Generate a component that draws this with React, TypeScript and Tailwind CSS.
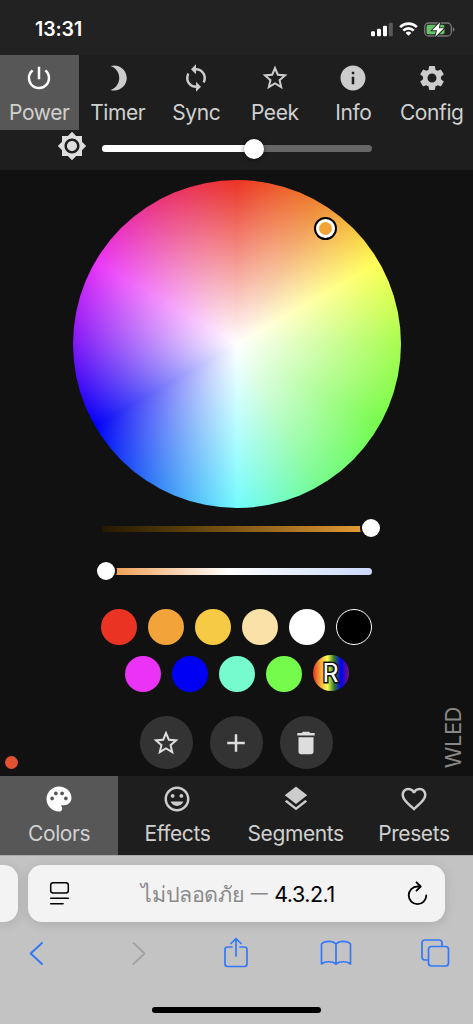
import React from 'react';
import {
    MdAdd,
    MdBrightness3,
    MdBrightness7,
    MdFavoriteBorder,
    MdInfo,
    MdInsertEmoticon,
    MdLayers,
    MdPalette,
    MdPowerSettingsNew,
    MdSettings,
    MdStarBorder,
    MdSync,
} from 'react-icons/md';

const topButtons = [
    { label: 'Power', Icon: MdPowerSettingsNew, active: true },
    { label: 'Timer', Icon: MdBrightness3 },
    { label: 'Sync', Icon: MdSync },
    { label: 'Peek', Icon: MdStarBorder },
    { label: 'Info', Icon: MdInfo },
    { label: 'Config', Icon: MdSettings },
];

const tabs = [
    { label: 'Colors', Icon: MdPalette, active: true },
    { label: 'Effects', Icon: MdInsertEmoticon },
    { label: 'Segments', Icon: MdLayers },
    { label: 'Presets', Icon: MdFavoriteBorder },
];

const StatusBar = () => {
    return (
        <div className="flex h-[55px] items-center justify-between bg-[#222] pt-[3px] pr-[17px] pl-[35px] text-white">
            <span className="pt-[2px] text-[19.5px] leading-none font-semibold tracking-[-0.1px]">13:31</span>
            <div className="flex items-center gap-[6px]">
                <svg width="22" height="15" viewBox="0 0 22 15" fill="#fff">
                    <rect x="0" y="9.3" width="4" height="5" rx="1.2" />
                    <rect x="6" y="6.8" width="4" height="7.5" rx="1.2" />
                    <rect x="12" y="3.8" width="4" height="10.5" rx="1.2" />
                    <rect x="17.8" y="0.8" width="4" height="13.5" rx="1.2" opacity="0.25" />
                </svg>
                <svg width="19" height="14" viewBox="0 0 19 14" fill="none" stroke="#fff" strokeWidth="2.7">
                    <path d="M1.1 5.1a11.9 11.9 0 0 1 16.8 0" />
                    <path d="M4.3 8.6a7.4 7.4 0 0 1 10.4 0" />
                    <path d="M9.5 13.8 6.6 10.9a4.1 4.1 0 0 1 5.8 0z" fill="#fff" stroke="none" />
                </svg>
                <svg width="32" height="17" viewBox="0 0 32 17">
                    <rect x="0.7" y="2" width="26.6" height="13" rx="4" fill="none" stroke="#777" strokeWidth="1.3" />
                    <path d="M28.8 6.3v4.4c1.1-.4 1.7-1.2 1.7-2.2s-.6-1.8-1.7-2.2z" fill="#777" />
                    <rect x="2.5" y="3.8" width="18" height="9.4" rx="2" fill="#65c466" />
                    <path
                        d="M16 1.2 8.2 9.3h4.9l-2 6.8 8.8-8.8h-5z"
                        fill="#fff"
                        stroke="#222"
                        strokeWidth="1.8"
                        paintOrder="stroke"
                    />
                </svg>
            </div>
        </div>
    );
};

interface NavButtonProps {
    label: string;
    Icon: React.ComponentType<{ className?: string }>;
    active?: boolean;
}

const NavButton = ({ label, Icon, active }: NavButtonProps) => {
    return (
        <button
            className={`flex min-w-0 flex-1 flex-col items-center pt-[8px] ${active ? 'bg-[#575757] text-white' : 'text-[#ccc]'}`}
        >
            <Icon className="size-[30px]" />
            <span className="mt-[7px] text-[21px] leading-[25px] tracking-[-0.4px] whitespace-nowrap text-[#d0d0d0]">{label}</span>
        </button>
    );
};

const ColorWheel = () => {
    return (
        <div className="relative size-[328px] rounded-full bg-[radial-gradient(closest-side,#fff,transparent),conic-gradient(#eb3323,#ef8632,#ffff54,#a6fc4e,#75fb4c,#75fb8d,#73fbfd,#3580f6,#0000f5,#7e18f6,#ea33f7,#ea3680,#eb3323)]">
            <div className="absolute top-[37px] left-[241px] size-[23px] rounded-full border-2 border-black bg-white p-[3px]">
                <div className="size-full rounded-full bg-[#f2a43a]" />
            </div>
        </div>
    );
};

const swatches = ['bg-[#eb3323]', 'bg-[#f2a43a]', 'bg-[#f6ca45]', 'bg-[#fae1a8]', 'bg-white', 'border border-white bg-black'];
const swatchesBelow = ['bg-[#ea33f7]', 'bg-[#0000f5]', 'bg-[#75fbce]', 'bg-[#75fb4c]'];

const Swatches = () => {
    return (
        <div className="mt-[34px] flex flex-col items-center gap-[11px]">
            <div className="flex gap-[11px]">
                {swatches.map((color) => (
                    <div key={color} className={`size-[36px] rounded-full ${color}`} />
                ))}
            </div>
            <div className="flex gap-[11px]">
                {swatchesBelow.map((color) => (
                    <div key={color} className={`size-[36px] rounded-full ${color}`} />
                ))}
                <div className="-mt-px flex size-[36px] items-center justify-center rounded-full bg-[linear-gradient(to_right,#eb3323,#f2a43a_20%,#ffff54_40%,#377e22_58%,#0000f5_78%,#75147c)]">
                    <span className="text-[25px] leading-none text-white [-webkit-text-stroke:3px_#111] [paint-order:stroke_fill]">R</span>
                </div>
            </div>
        </div>
    );
};

const TrashIcon = () => {
    return (
        <svg viewBox="0 0 24 24" className="size-[30px]" fill="currentColor">
            <path d="M6 19c0 1.1.9 2 2 2h8c1.1 0 2-.9 2-2V7.300H6V19zM18.500 4h-3l-.7-.7c-.2-.2-.4-.3-.7-.3H9.900c-.3 0-.5.1-.7.3L8.500 4h-3c-.3 0-.5.2-.5.500v1.500h14V4.500c0-.3-.2-.5-.5-.5z" />
        </svg>
    );
};

const roundButton = 'flex size-[53px] items-center justify-center rounded-full bg-[#333] text-[#ddd]';

const Browser = () => {
    return (
        <div className="h-[169px] overflow-hidden border-t border-[#aaa] bg-[#c3c3c3]">
            <div className="mt-[9px] flex gap-[10px]">
                <div className="h-[57px] w-[18px] rounded-r-[14px] bg-[#f3f3f3] shadow-[0_2px_12px_rgba(0,0,0,0.12)]" />
                <div className="flex h-[57px] w-[417px] items-center justify-between rounded-[14px] bg-[#f3f3f3] pr-[16px] pl-[21px] shadow-[0_2px_12px_rgba(0,0,0,0.12)]">
                    <svg width="22" height="26" viewBox="0 0 22 26" fill="none" stroke="#000" strokeWidth="1.5" strokeLinecap="round">
                        <rect x="1.7" y="1.7" width="17.6" height="10.4" rx="2.5" />
                        <path d="M1.7 17.2h17.6M1.7 22.7h12.4" />
                    </svg>
                    <p className="flex items-center gap-[6px] pt-px text-[21.5px] whitespace-nowrap text-black">
                        <span className="tracking-[-0.4px] text-[#8a8a8d]">ไม่ปลอดภัย</span>
                        <span className="w-[18px] text-center text-[17px] text-[#8a8a8d]">—</span>
                        <span className="tracking-[-0.5px]">4.3.2.1</span>
                    </p>
                    <svg width="24" height="26" viewBox="0 0 24 26" fill="none" stroke="#000" strokeWidth="1.8" strokeLinecap="round" strokeLinejoin="round">
                        <path d="M14.5 5.500h-2a8.800 8.800 0 1 0 8.800 8.800" />
                        <path d="m11.5 1.300 4.200 4.200-4.200 4.200" />
                    </svg>
                </div>
            </div>
            <div className="mt-[13px] flex items-center justify-between pr-[22px] pl-[21px] text-[#3478f6]">
                <svg width="32" height="36" viewBox="0 0 32 36" fill="none" stroke="currentColor" strokeWidth="2" strokeLinecap="round" strokeLinejoin="round">
                    <path d="M21 8 9.700 18.500 21 29" />
                </svg>
                <svg width="32" height="36" viewBox="0 0 32 36" fill="none" stroke="#a3a3a3" strokeWidth="2" strokeLinecap="round" strokeLinejoin="round">
                    <path d="m12.500 8 11 10.500-11 10.500" />
                </svg>
                <svg width="32" height="36" viewBox="-2 0 32 36" fill="none" stroke="currentColor" strokeWidth="1.7" strokeLinecap="round" strokeLinejoin="round">
                    <path d="M10 12H5.500Q3 12 3 14.500v14Q3 31.500 5.500 31.500h17Q25 31.500 25 28.500v-14Q25 12 22.500 12H18M14 21V3.500M9 8.500l5-5 5 5" />
                </svg>
                <svg width="32" height="36" viewBox="0 0 32 36" fill="none" stroke="currentColor" strokeWidth="1.7" strokeLinejoin="round">
                    <path d="M16 9C12.500 5.500 5 5.500 1.500 9v20c3.500-3 11-3 14.500 0 3.500-3 11-3 14.500 0V9C27 5.500 19.500 5.500 16 9zm0 0v20" />
                </svg>
                <svg width="32" height="36" viewBox="0 0 32 36" fill="none" stroke="currentColor" strokeWidth="1.7">
                    <rect x="9.5" y="11.5" width="20" height="19.5" rx="3" />
                    <path d="M9.500 25H6q-3 0-3-3V8q0-3 3-3h14q3 0 3 3v3.500" />
                </svg>
            </div>
            <div className="mx-auto mt-[36px] h-[6px] w-[169px] rounded-full bg-black" />
        </div>
    );
};

const App = () => {
    return (
        <div className="flex h-[1024px] w-[473px] flex-col overflow-hidden bg-[#111] font-['Inter','Noto_Sans',sans-serif]">
            <StatusBar />

            <header className="h-[115px] bg-[#1e1e1e]">
                <nav className="flex h-[75px] pr-[2px]">
                    {topButtons.map((button) => (
                        <NavButton key={button.label} {...button} />
                    ))}
                </nav>
                <div className="flex pl-[57px]">
                    <MdBrightness7 className="mt-px size-[30px] text-[#ddd]" />
                    <div className="relative mt-[15px] ml-[15px] h-[7px] w-[270px] rounded-full bg-[#666]">
                        <div className="h-full w-[152px] rounded-full bg-white" />
                        <div className="absolute -top-[6px] left-[142px] size-[20px] rounded-full bg-white shadow-[0_1px_5px_rgba(0,0,0,0.5)]" />
                    </div>
                </div>
            </header>

            <main className="flex h-[606px] flex-col items-center pt-[10px]">
                <ColorWheel />

                <div className="relative mt-[18px] h-[6px] w-[270px] rounded-full bg-linear-to-r from-[#241900] to-[#eda036]">
                    <div className="absolute -top-[7px] left-[260px] size-[18px] rounded-full bg-white ring-2 ring-[#111]" />
                </div>
                <div className="relative mt-[36px] h-[7px] w-[270px] rounded-full bg-[linear-gradient(to_right,#ee9543,#fff_47%,#cbd9fb)]">
                    <div className="absolute -top-[6px] -left-[5px] size-[18px] rounded-full bg-white ring-2 ring-[#111]" />
                </div>

                <Swatches />

                <div className="mt-[24px] flex gap-[17px] pr-px">
                    <button className={roundButton}>
                        <MdStarBorder className="size-[30px]" />
                    </button>
                    <button className={roundButton}>
                        <MdAdd className="size-[30px]" />
                    </button>
                    <button className={roundButton}>
                        <TrashIcon />
                    </button>
                </div>

                {/* connection dot and vertical brand name, floating above the tabs */}
                <div className="-mt-[62px] flex w-full items-end justify-between pr-[6px] pl-[5px]">
                    <div className="-mb-[1px] size-[13px] rounded-full bg-[#e05232]" />
                    <span className="rotate-180 text-[22px] leading-[28px] tracking-[-0.5px] text-[#888] [writing-mode:vertical-rl]">WLED</span>
                </div>
            </main>

            <nav className="flex h-[79px] bg-[#1e1e1e]">
                {tabs.map((tab) => (
                    <NavButton key={tab.label} {...tab} />
                ))}
            </nav>

            <Browser />
        </div>
    );
};

export default App;
